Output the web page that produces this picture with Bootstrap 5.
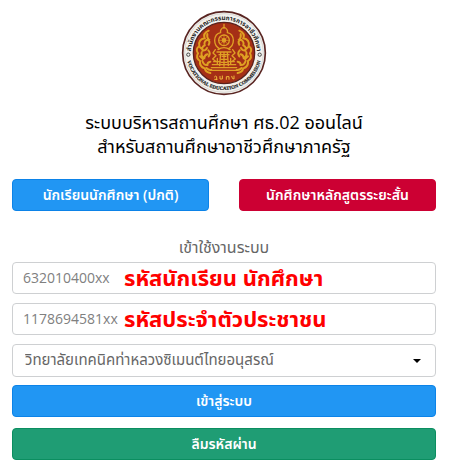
<!DOCTYPE html>
<html lang="th">
<head>
<meta charset="utf-8">
<meta name="viewport" content="width=device-width, initial-scale=1">
<title>ระบบบริหารสถานศึกษา ศธ.02 ออนไลน์</title>
<link href="https://cdn.jsdelivr.net/npm/bootstrap@5.3.0/dist/css/bootstrap.min.css" rel="stylesheet">
<style>
  body { font-family: "Open Sans", "Noto Sans", "Noto Sans Thai", sans-serif; font-size: 14px; line-height: 20px; color: #000; background: #fff; }
  .login-page { padding: 10px 14px 8px 12px; }
  .emblem { width: 86px; height: 86px; }
  .title { font-size: 18px; line-height: 24px; margin: 14px 0 21px; }
  .choices { gap: 30px; margin-bottom: 26px; }
  .btn { font-size: 14px; line-height: 20px; padding: 5px 8px; border-radius: 4px; font-weight: 600; color: #fff; }
  .btn-azure { background: #2196f3; border-color: #0c83e8; }
  .btn-crimson { background: #cc0033; border-color: #cc0033; }
  .btn-jade { background: #1f9d74; border-color: #0b8e60; }
  .intro { font-size: 16px; line-height: 20px; color: #666; margin-bottom: 5px; }
  .entry { margin-bottom: 9px; }
  .actions { gap: 11px; }
  .form-control, .form-select { border: 1px solid #ced0d2; border-radius: 4px; color: #666; }
  .form-control { font-size: 14px; line-height: 20px; padding: 5px 10px; }
  .form-control::placeholder { color: #808080; }
  .form-select { font-family: "Noto Sans Thai", "Noto Sans", sans-serif; font-size: 15px; line-height: 31px; padding: 0 30px 0 12px; background-image: url("data:image/svg+xml,%3Csvg xmlns='http://www.w3.org/2000/svg' viewBox='0 0 8 4'%3E%3Cpath d='M0 0h8L4 4z'/%3E%3C/svg%3E"); background-size: 8px 4px; background-position: right 14px center; }
  .hint { left: 112px; top: 0; bottom: 3px; font-size: 22px; font-weight: 700; color: #f00; white-space: nowrap; pointer-events: none; }
</style>
</head>
<body>
<main class="login-page">
  <header class="text-center">
    <svg class="emblem d-block mx-auto" viewBox="0 0 258 258" role="img" aria-label="Vocational Education Commission">
      <defs>
        <path id="arcTop" d="M42 176A99 99 0 1 1 216 176"/>
        <path id="arcBottom" d="M17 142A113 113 0 0 0 241 142"/>
        <g id="flame" fill="none" stroke="#dfa023" stroke-width="6" stroke-linecap="round">
          <path d="M83 62q-18 8-12 23q-20 4-16 23q-13 9-4 22q-8 14 6 23q-2 17 14 22q3 12 17 14"/>
          <path d="M79 72q-2 10 4 16q-16 4-12 18q-11 6-6 16q10 0 13-8M62 127q-3 13 8 17q1-9 9-11M64 152q4 14 15 13q0-9 9-10M80 89q9 5 3 15M82 121q8 8 1 18M76 174q7 7 15 6M57 112l8 7M57 139l9 8"/>
        </g>
      </defs>
      <circle cx="129" cy="129" r="124" fill="#f2f1ed" stroke="#592522" stroke-width="5"/>
      <circle cx="129" cy="129" r="118" fill="none" stroke="#aaa6a2" stroke-width="1"/>
      <circle cx="129" cy="129" r="92" fill="#a52f16" stroke="#5a211c" stroke-width="4"/>
      <g font-weight="700" fill="#222">
        <text font-size="19"><textPath href="#arcTop" startOffset="50%" text-anchor="middle">สำนักงานคณะกรรมการการอาชีวศึกษา</textPath></text>
        <text font-size="15" font-family="Liberation Serif, serif" stroke="#222" stroke-width="0.6"><textPath href="#arcBottom" startOffset="50%" text-anchor="middle">VOCATIONAL EDUCATION COMMISSION</textPath></text>
      </g>
      <g fill="none" stroke="#444" stroke-width="3">
        <circle cx="22" cy="134" r="5"/><circle cx="236" cy="134" r="5"/>
      </g>
      <use href="#flame"/>
      <use href="#flame" transform="matrix(-1 0 0 1 258 0)"/>
      <g fill="none" stroke="#e0a026" stroke-width="4" stroke-linejoin="round" stroke-linecap="round">
        <path d="M129 43v12M129 51q-13 7-10 17q-17 3-18 23q0 17 14 25M129 51q13 7 10 17q17 3 18 23q0 17-14 25"/>
        <circle cx="129" cy="91" r="16"/>
        <circle cx="129" cy="91" r="5" fill="#e6a423"/>
        <path d="M129 75v32M113 91h32M118 80l22 22M140 80l-22 22" stroke-width="2"/>
        <path d="M111 119q18-12 36 0M108 126h42M114 134h30M119 127l-3 40M129 126v43M139 127l3 40M103 119l-7 10l9 8l-10 10l9 7M155 119l7 10l-9 8l10 10l-9 7M98 155h20M140 155h20M94 164h70M91 173h76M88 181h82"/>
        <path d="M123 139h12M120 148h18M120 157h18M109 145v16M149 145v16"/>
      </g>
      <g fill="none" stroke="#efb83b" stroke-width="3" stroke-linecap="round">
        <path d="M100 201q5-7 7 0v8M101 208h7M117 199v8h7v-9M136 208v-8h8v8M152 199q1 9 7 8v-9"/>
      </g>
    </svg>
    <h1 class="title fw-normal">ระบบบริหารสถานศึกษา ศธ.02 ออนไลน์<br>สำหรับสถานศึกษาอาชีวศึกษาภาครัฐ</h1>
  </header>
  <div class="choices d-flex">
    <button type="button" class="btn btn-azure flex-fill w-50 text-nowrap">นักเรียนนักศึกษา (ปกติ)</button>
    <button type="button" class="btn btn-crimson flex-fill w-50 text-nowrap">นักศึกษาหลักสูตรระยะสั้น</button>
  </div>
  <form>
    <p class="intro text-center">เข้าใช้งานระบบ</p>
    <div class="entry position-relative">
      <input type="text" class="form-control" id="studentId" placeholder="632010400xx">
      <label for="studentId" class="hint position-absolute d-flex align-items-center">รหัสนักเรียน นักศึกษา</label>
    </div>
    <div class="entry position-relative">
      <input type="text" class="form-control" id="citizenId" placeholder="1178694581xx">
      <label for="citizenId" class="hint position-absolute d-flex align-items-center">รหัสประจำตัวประชาชน</label>
    </div>
    <label for="college" class="visually-hidden">สถานศึกษา</label>
    <select id="college" class="form-select mb-2"><option>วิทยาลัยเทคนิคท่าหลวงซิเมนต์ไทยอนุสรณ์</option></select>
    <div class="actions d-grid">
      <button type="submit" class="btn btn-azure">เข้าสู่ระบบ</button>
      <button type="button" class="btn btn-jade">ลืมรหัสผ่าน</button>
    </div>
  </form>
</main>
<script src="https://cdn.jsdelivr.net/npm/bootstrap@5.3.0/dist/js/bootstrap.bundle.min.js"></script>
</body>
</html>
